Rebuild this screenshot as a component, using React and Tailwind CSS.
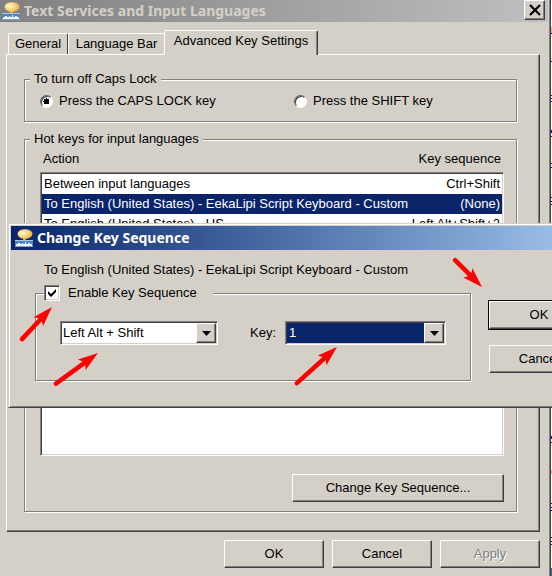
import React from "react";

const raised =
  "border border-t-white border-l-white border-r-[#404040] border-b-[#404040] shadow-[inset_-1px_-1px_0_#808080]";
const sunken =
  "border border-t-[#808080] border-l-[#808080] border-r-white border-b-white shadow-[inset_1px_1px_0_#404040,inset_-1px_-1px_0_#d4d0c8]";
const etched =
  "border border-[#808080] shadow-[inset_1px_1px_0_#fff,1px_1px_0_#fff]";

function AppIcon() {
  return (
    <svg width="18" height="18" viewBox="0 0 18 18" className="shrink-0" aria-hidden="true">
      <defs>
        <radialGradient id="bubble" cx="0.35" cy="0.4" r="0.7">
          <stop offset="0" stopColor="#fff8d8" />
          <stop offset="0.5" stopColor="#fbd77c" />
          <stop offset="1" stopColor="#e9a63c" />
        </radialGradient>
      </defs>
      <path d="M7 8l2 4 4-4z" fill="#f3bf5c" />
      <ellipse cx="10" cy="5" rx="7.5" ry="4.8" fill="url(#bubble)" />
      <rect x="0" y="11" width="18" height="6" fill="#4f84bd" />
      <rect x="0" y="11" width="18" height="1" fill="#a9c6e4" />
      <path d="M1 15h2v-1h2v1h2v-1h1v1h2v-2h1v2h2v-1h2v1h2v2H1z" fill="#eef5fc" />
      <rect x="0" y="17" width="18" height="1" fill="#7ea6d0" />
    </svg>
  );
}

function Group({ legend, className, legendClass = "px-1", children }) {
  return (
    <fieldset className={`min-w-0 ${etched} ${className}`}>
      <legend className={`bg-[#d4d0c8] leading-4 ${legendClass}`}>{legend}</legend>
      {children}
    </fieldset>
  );
}

function Radio({ label, checked, className }) {
  return (
    <label className={`flex items-center gap-1.5 ${className}`}>
      <input
        type="radio"
        name="caps"
        defaultChecked={checked}
        className="size-[13px] appearance-none rounded-full border border-t-[#606060] border-l-[#606060] border-r-white border-b-white bg-white shadow-[inset_1px_1px_0_#404040] checked:bg-[radial-gradient(circle,#000_0_3px,#fff_3px)]"
      />
      {label}
    </label>
  );
}

function Combo({ id, options, className, selectClass }) {
  return (
    <div className={`grid h-6 grid-cols-[1fr_20px] bg-white p-px ${sunken} ${className}`}>
      <select
        id={id}
        className={`col-span-2 col-start-1 row-start-1 appearance-none outline-none ${selectClass}`}
      >
        {options.map((o) => (
          <option key={o}>{o}</option>
        ))}
      </select>
      <span
        className={`pointer-events-none col-start-2 row-start-1 flex items-center justify-center bg-[#d4d0c8] ${raised}`}
      >
        <svg width="9" height="5" viewBox="0 0 9 5" aria-hidden="true">
          <path d="M0 0h9L4.500 5z" />
        </svg>
      </span>
    </div>
  );
}

function Button({ children, className, disabled }) {
  return (
    <button
      type="button"
      disabled={disabled}
      className={`h-7 bg-[#d4d0c8] ${raised} ${className}`}
    >
      {children}
    </button>
  );
}

function Tab({ children, selected, className }) {
  return (
    <button
      type="button"
      role="tab"
      aria-selected={selected}
      className={`rounded-t-[2px] border border-b-0 border-t-white border-l-white border-r-[#404040] bg-[#d4d0c8] whitespace-nowrap ${className}`}
    >
      {children}
    </button>
  );
}

const rows = [
  ["Between input languages", "Ctrl+Shift"],
  ["To English (United States) - EekaLipi Script Keyboard - Custom", "(None)"],
  ["To English (United States) - US", "Left Alt+Shift+2"],
];

function KeyDialog() {
  return (
    <div className="absolute top-[223px] right-0 left-2 overflow-hidden">
      <section
        aria-label="Change Key Sequence"
        className="w-[592px] border border-[#d4d0c8] border-b-[#404040] bg-[#d4d0c8] p-0.5 pb-0 shadow-[inset_1px_1px_0_#fff,inset_0_-1px_0_#808080]"
      >
        <header className="flex h-6 items-center gap-1 bg-linear-to-r from-[#0a246a] to-[#a6caf0] pl-1 font-['Noto_Sans',sans-serif] text-[14px] font-bold text-white">
          <AppIcon />
          <h2>Change Key Sequence</h2>
        </header>
        <div className="flex h-[157px] items-start">
          <div className="pt-3 pl-6">
            <p className="pl-[9px] leading-4">
              To English (United States) - EekaLipi Script Keyboard - Custom
            </p>
            <Group
              className="mt-[7px] h-24 w-[436px] px-6"
              legendClass="-ml-4 pr-4"
              legend={
                <label className="flex items-center gap-2">
                  <span className="grid">
                    <input
                      type="checkbox"
                      defaultChecked
                      className={`peer col-start-1 row-start-1 size-4 appearance-none bg-white ${sunken}`}
                    />
                    <svg
                      viewBox="0 0 16 16"
                      aria-hidden="true"
                      className="pointer-events-none invisible col-start-1 row-start-1 size-4 peer-checked:visible"
                    >
                      <path d="M4 6v3l3 3 5-5V4L7 9z" />
                    </svg>
                  </span>
                  Enable Key Sequence
                </label>
              }
            >
              <div className="flex items-center pt-5">
                <Combo
                  id="modifier"
                  options={["Left Alt + Shift", "Ctrl + Shift"]}
                  className="w-[159px]"
                  selectClass="pl-px"
                />
                <label htmlFor="key" className="ml-8 w-[35px]">
                  Key:
                </label>
                <Combo
                  id="key"
                  options={["1", "2", "3"]}
                  className="w-[162px]"
                  selectClass="mr-px bg-[#0a246a] pl-0.5 text-white"
                />
              </div>
            </Group>
          </div>
          <div className="ml-[18px] flex w-[100px] shrink-0 flex-col gap-4 pt-[51px]">
            <Button className="outline outline-black">OK</Button>
            <Button>Cancel</Button>
          </div>
        </div>
      </section>
    </div>
  );
}

function Arrow({ x, y, angle, length }) {
  return (
    <g transform={`translate(${x} ${y}) rotate(${angle})`} fill="#f00">
      <path d="M0 0L-20 -6.500L-16 0L-20 6.500z" />
      <path d={`M-15 0H${-length}`} stroke="#f00" strokeWidth="4.600" strokeLinecap="round" />
    </g>
  );
}

export default function App() {
  return (
    <div className="relative flex overflow-hidden bg-white font-['Liberation_Sans',Arial,sans-serif] text-[13px] leading-4 text-black">
      <main className="min-h-screen min-w-0 flex-1 border-r border-[#404040] bg-[#d4d0c8] shadow-[inset_-1px_0_0_#808080]">
        <header className="mr-0.5 flex h-[22px] items-center gap-1 bg-linear-to-r from-[#808080] to-[#c0c0c0] pr-[3px] pl-0.5 font-['Noto_Sans',sans-serif] text-[14px] font-bold text-[#d4d0c8]">
          <AppIcon />
          <h1 className="flex-1">Text Services and Input Languages</h1>
          <button
            type="button"
            aria-label="Close"
            className={`flex h-5 w-[21px] items-center justify-center self-start bg-[#d4d0c8] ${raised}`}
          >
            <svg width="12" height="12" viewBox="0 0 12 12" aria-hidden="true">
              <path d="M1 1l10 10M11 1L1 11" stroke="#000" strokeWidth="2.200" />
            </svg>
          </button>
        </header>

        <div className="pt-2 pr-[10px] pl-1.5">
          <div role="tablist" className="flex items-end pl-0.5">
            <Tab className="h-[21px] w-[60px]">General</Tab>
            <Tab className="h-[21px] w-24 border-r-0">Language Bar</Tab>
            <Tab selected className="relative -mb-px h-[25px] w-[154px] pb-1 shadow-[inset_-1px_0_0_#808080]">
              Advanced Key Settings
            </Tab>
          </div>

          <div className={`h-[478px] pt-4 pr-[22px] pl-[17px] ${raised}`}>
            <Group legend="To turn off Caps Lock" className="h-[51px] pr-1.5 pl-[5px]">
              <div className="flex pt-1.5 pl-2.5">
                <Radio label="Press the CAPS LOCK key" checked className="w-[254px]" />
                <Radio label="Press the SHIFT key" />
              </div>
            </Group>

            <Group
              legend="Hot keys for input languages"
              className="mt-[9px] flex h-[381px] flex-col px-[5px]"
            >
              <table className="mr-[7px] ml-2.5 block">
                <thead className="block">
                  <tr className="flex justify-between px-[3px] pt-1 pb-[5px]">
                    <th className="font-normal">Action</th>
                    <th className="font-normal">Key sequence</th>
                  </tr>
                </thead>
                <tbody className={`block h-[284px] bg-white p-px ${sunken}`}>
                  {rows.map(([action, keys], i) => (
                    <tr
                      key={action}
                      className={`flex h-5 items-center justify-between px-0.5 ${i === 1 ? "bg-[#0a246a] text-white" : ""}`}
                    >
                      <td>{action}</td>
                      <td>{keys}</td>
                    </tr>
                  ))}
                </tbody>
              </table>
              <div className="mt-[18px] flex justify-end pr-[7px]">
                <Button className="w-[212px]">Change Key Sequence...</Button>
              </div>
            </Group>
          </div>

          <div className="flex justify-end gap-2 py-2">
            <Button className="w-[100px]">OK</Button>
            <Button className="w-[100px]">Cancel</Button>
            <Button className="w-[100px] text-[#808080] text-shadow-[1px_1px_0_#fff]" disabled>
              Apply
            </Button>
          </div>
        </div>
      </main>

      <svg width="1" height="576" viewBox="0 0 1 576" aria-hidden="true" className="shrink-0">
        <path d="M0 27h1v6H0zM0 470h1v4H0z" fill="#eeb0b0" />
        <path
          d="M0 33h1v1H0zM0 61h1v1H0zM0 95h1v1H0zM0 98h1v1H0zM0 101h1v1H0zM0 130h1v3H0zM0 136h1v1H0zM0 163h1v1H0zM0 167h1v1H0zM0 197h1v1H0zM0 201h1v1H0zM0 204h1v1H0zM0 436h1v3H0zM0 442h1v1H0zM0 503h1v1H0zM0 507h1v1H0zM0 510h1v1H0zM0 537h1v1H0zM0 541h1v1H0zM0 544h1v1H0z"
          fill="#14146e"
        />
        <path d="M0 568h1v8H0z" fill="#4a6a90" />
      </svg>

      <KeyDialog />

      <svg
        width="552"
        height="576"
        viewBox="0 0 552 576"
        aria-hidden="true"
        className="pointer-events-none absolute top-0 left-0"
      >
        <Arrow x={52} y={307} angle={-47} length={44} />
        <Arrow x={98} y={353} angle={-36} length={52} />
        <Arrow x={337} y={347} angle={-42} length={54} />
        <Arrow x={482} y={287} angle={45} length={38} />
      </svg>
    </div>
  );
}
